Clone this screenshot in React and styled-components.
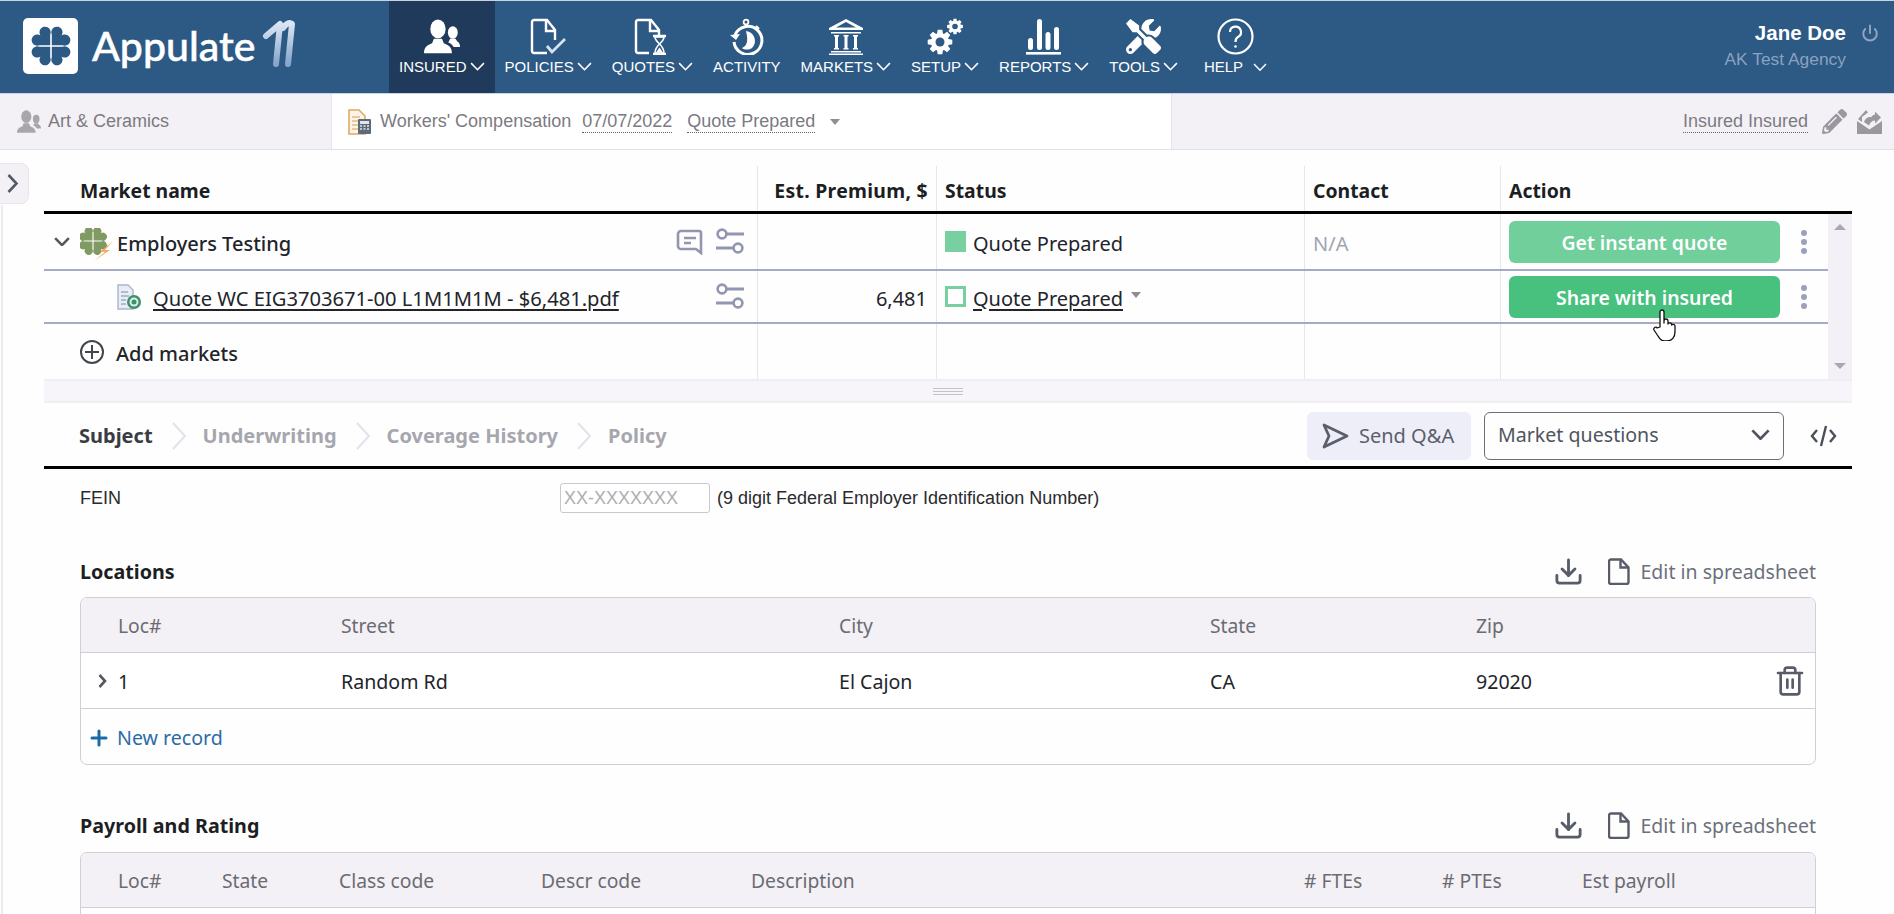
import React from "react";
import styled, { createGlobalStyle } from "styled-components";
import { FaTools, FaPencilAlt } from "react-icons/fa";
import { Power, Download, Trash2, Plus } from "lucide-react";

const GlobalStyle = createGlobalStyle`
    html, body {
        margin: 0;
        height: 100%;
        overflow: hidden;
        background: #fefefe;
        font-family: "Noto Sans", "Liberation Sans", sans-serif;
        color: #22242a;
    }
    * { box-sizing: border-box; }
`;

const Page = styled.div`
    width: 1894px;
    height: 914px;
    overflow: hidden;
`;

/* top bar */
const TopBar = styled.header`
    height: 94px;
    display: flex;
    background: #2d5985;
    border-top: 1px solid #c9d4e3;
    border-bottom: 1px solid #cdd3e6;
    color: #fff;
    font-family: "Liberation Sans", Arial, sans-serif;
`;

const LogoArea = styled.div`
    width: 389px;
    padding: 17px 0 0 23px;
    display: flex;
    align-items: flex-start;
`;

const LogoBox = styled.div`
    width: 55px;
    height: 56px;
    background: #fff;
    border-radius: 5px;
    display: flex;
    align-items: center;
    justify-content: center;
`;

const LogoName = styled.span`
    margin: 4px 0 0 14px;
    font-family: Lato, sans-serif;
    font-size: 41px;
    line-height: 48px;
    font-weight: 500;
    -webkit-text-stroke: 0.5px #fff;
`;

const NavItem = styled.div`
    padding: 17px 10px 0;
    display: flex;
    flex-direction: column;
    align-items: center;
    background: ${(p) => (p.$active ? "#1f3a5a" : "transparent")};
`;

const HelpItem = styled(NavItem)`
    margin-left: 6px;
`;

const NavIcon = styled.div`
    height: 37px;
    display: flex;
    align-items: center;
    justify-content: center;
`;

const NavLabel = styled.div`
    margin-top: 3px;
    display: flex;
    align-items: center;
    gap: ${(p) => p.$gap || 3}px;
    font-size: 15px;
    line-height: 18px;
    white-space: nowrap;
`;

const UserArea = styled.div`
    margin-left: auto;
    padding: 20px 15px 0 0;
    display: flex;
    gap: 15px;
    align-items: flex-start;
`;

const UserText = styled.div`
    text-align: right;
`;

const UserName = styled.div`
    font-size: 20.5px;
    line-height: 24px;
    font-weight: 700;
`;

const UserAgency = styled.div`
    margin-top: 2px;
    font-size: 17.4px;
    line-height: 24px;
    color: #8aa3bf;
`;

/* bar under the top bar */
const SubBar = styled.div`
    height: 56px;
    display: flex;
    font-family: "Liberation Sans", Arial, sans-serif;
    font-size: 18px;
    color: #7c7a82;
    border-bottom: 1px solid #e2e0e6;
`;

const SubSection = styled.div`
    width: ${(p) => p.$width};
    flex: ${(p) => (p.$width ? "none" : 1)};
    background: ${(p) => (p.$white ? "#fff" : "#f3f1f5")};
    border-left: ${(p) => (p.$white ? "1px solid #e4e4ee" : "none")};
    border-right: ${(p) => (p.$white ? "1px solid #e4e4ee" : "none")};
    padding: ${(p) => p.$padding};
    display: flex;
    align-items: center;
    justify-content: ${(p) => (p.$end ? "flex-end" : "flex-start")};
    gap: ${(p) => p.$gap ?? 8}px;
`;

const Dotted = styled.span`
    border-bottom: 1px dotted #666;
    line-height: 21px;
    margin-top: 1px;
    margin-left: ${(p) => p.$left || 0}px;
`;

const SubLabel = styled.span`
    margin-left: 8px;
`;

const Caret = styled.span`
    width: 0;
    height: 0;
    border-left: 5.5px solid transparent;
    border-right: 5.5px solid transparent;
    border-top: 6px solid ${(p) => p.$color || "#8e8c94"};
    margin-left: ${(p) => p.$left || 0}px;
    margin-bottom: ${(p) => p.$raise || 0}px;
`;

/* main */
const Main = styled.main`
    position: relative;
    padding: 16px 42px 0 44px;
`;

const SideEdge = styled.div`
    position: absolute;
    left: 1px;
    top: 55px;
    bottom: 0;
    width: 2px;
    background: #eaeaf0;
`;

const SideToggle = styled.div`
    position: absolute;
    left: 0;
    top: 13px;
    width: 29px;
    height: 41px;
    background: #f3f1f5;
    border: 1px solid #e8e6ec;
    border-left: none;
    border-radius: 0 8px 8px 0;
    display: flex;
    align-items: center;
    padding-left: 7px;
    color: #555a66;
`;

const MarketHead = styled.div`
    display: grid;
    grid-template-columns: 713px 179px 368px 196px 1fr;
    height: 48px;
    border-bottom: 3px solid #000;
`;

const HeadCell = styled.div`
    display: flex;
    align-items: center;
    justify-content: ${(p) => (p.$right ? "flex-end" : "flex-start")};
    padding: ${(p) => (p.$right ? "4px 8px 0 0" : p.$first ? "4px 0 0 36px" : "4px 0 0 8px")};
    border-left: ${(p) => (p.$first ? "none" : "1px solid #e6e6f0")};
    font-size: 19.4px;
    font-weight: 700;
    letter-spacing: ${(p) => (p.$right ? "0.3px" : "0")};
    color: #1c1e24;
    white-space: nowrap;
`;

const MarketBody = styled.div`
    display: flex;
`;

const MarketRows = styled.div`
    flex: 1;
`;

const MarketRow = styled.div`
    display: grid;
    grid-template-columns: 713px 179px 368px 196px 1fr;
    height: ${(p) => p.$height}px;
    border-bottom: ${(p) => (p.$last ? "none" : "2px solid #a6aac6")};
`;

const Cell = styled.div`
    display: flex;
    align-items: center;
    justify-content: ${(p) => (p.$right ? "flex-end" : "flex-start")};
    gap: ${(p) => p.$gap || 0}px;
    padding: ${(p) => p.$padding || "0 0 0 8px"};
    border-left: ${(p) => (p.$first ? "none" : "1px solid #e6e6f0")};
    font-size: 20px;
    white-space: nowrap;
`;

const RowText = styled.span`
    padding-top: 3px;
    font-weight: ${(p) => p.$weight || 400};
    color: ${(p) => p.$color || "inherit"};
`;

const RowTools = styled.div`
    margin-left: auto;
    display: flex;
    align-items: center;
    gap: 13px;
    color: #9296b0;
`;

const Link = styled(RowText)`
    font-size: ${(p) => p.$size || 20}px;
    text-decoration: underline;
    text-underline-offset: 3px;
    text-decoration-thickness: 2px;
`;

const Swatch = styled.span`
    width: 21px;
    height: 21px;
    border: 3px solid #78d0a0;
    background: ${(p) => (p.$filled ? "#78d0a0" : "#fff")};
    margin-right: 7px;
    flex: none;
`;

const IconSlot = styled.span`
    display: flex;
    margin: 5px 3px 0 10px;
`;

const ActionButton = styled.div`
    width: 271px;
    height: 42px;
    padding-top: 2px;
    border-radius: 6px;
    background: ${(p) => p.$color};
    color: #fff;
    font-size: 19.4px;
    font-weight: 600;
    display: flex;
    align-items: center;
    justify-content: center;
`;

const MoreDots = styled.div`
    margin-left: 21px;
    display: flex;
    flex-direction: column;
    gap: 3px;
    & > i {
        width: 6px;
        height: 6px;
        border-radius: 50%;
        background: #9ca0bb;
    }
`;

const ScrollTrack = styled.div`
    width: 24px;
    background: #f3f1f5;
    display: flex;
    flex-direction: column;
    justify-content: space-between;
    align-items: center;
    padding: 10px 0;
`;

const ScrollArrow = styled.span`
    width: 0;
    height: 0;
    border-left: 6px solid transparent;
    border-right: 6px solid transparent;
    border-bottom: ${(p) => (p.$up ? "6px solid #a8a8b0" : "none")};
    border-top: ${(p) => (p.$up ? "none" : "6px solid #a8a8b0")};
`;

const Cursor = styled.svg`
    position: absolute;
    left: 1652px;
    top: 159px;
`;

const Splitter = styled.div`
    height: 24px;
    background: #f7f5f9;
    border-top: 2px solid #f0eef3;
    border-bottom: 2px solid #f0eef3;
    display: flex;
    flex-direction: column;
    align-items: center;
    justify-content: center;
    gap: 2px;
    & > i {
        width: 30px;
        height: 1px;
        background: #c2c2ca;
    }
`;

const StepBar = styled.div`
    height: 66px;
    display: flex;
    align-items: center;
    padding: 2px 15px 0 35px;
    border-bottom: 3px solid #000;
`;

const Step = styled.span`
    font-size: 20px;
    font-weight: 700;
    color: ${(p) => (p.$active ? "#3a3c44" : "#a6a7ae")};
`;

const StepSep = styled.svg`
    margin: 0 16px 0 19px;
    flex: none;
`;

const SendButton = styled.div`
    margin-left: auto;
    width: 164px;
    height: 48px;
    border-radius: 6px;
    background: #eeeef8;
    color: #5b5f6c;
    display: flex;
    align-items: center;
    padding-left: 15px;
    gap: 10px;
    font-size: 20px;
`;

const QuestionSelect = styled.div`
    margin-left: 13px;
    width: 300px;
    height: 48px;
    border: 1px solid #6a7078;
    border-radius: 6px;
    display: flex;
    align-items: center;
    justify-content: space-between;
    padding: 0 13px 2px;
    font-size: 19.6px;
    color: #50545e;
`;

const CodeButton = styled.div`
    margin-left: 26px;
    display: flex;
    color: #4b4f5a;
`;

const Form = styled.div`
    padding: 0 36px 0 36px;
`;

const FeinRow = styled.div`
    display: grid;
    grid-template-columns: 480px 150px 1fr;
    align-items: center;
    margin-top: 14px;
    height: 30px;
    font-family: "Liberation Sans", Arial, sans-serif;
    font-size: 18px;
    color: #2a2a2e;
`;

const FeinInput = styled.input`
    width: 150px;
    height: 30px;
    padding: 0 3px;
    border: 1px solid #c8c8ce;
    border-radius: 3px;
    font: inherit;
    &::placeholder {
        color: #aeaeb2;
        opacity: 1;
    }
`;

const FeinHint = styled.span`
    margin-left: 7px;
    white-space: nowrap;
`;

const SectionHead = styled.div`
    display: flex;
    align-items: center;
    height: 38px;
    margin-top: ${(p) => p.$top}px;
    margin-bottom: ${(p) => p.$bottom}px;
`;

const SectionTitle = styled.h3`
    margin: 0;
    font-size: 19.7px;
    font-weight: 700;
    color: #1c1e24;
`;

const SectionTools = styled.div`
    margin-left: auto;
    display: flex;
    align-items: center;
    color: #585c68;
    font-size: 19.5px;
    & > span {
        color: #6c707c;
        margin-left: 11px;
    }
    & > svg + svg {
        margin-left: 24px;
    }
`;

const DataTable = styled.div`
    border: 1px solid #cfcfd6;
    border-radius: 7px;
    overflow: hidden;
`;

const DataRow = styled.div`
    display: grid;
    grid-template-columns: ${(p) => p.$columns};
    height: ${(p) => p.$height || 55}px;
    padding-top: 1px;
    align-items: center;
    font-size: ${(p) => (p.$head ? 19.3 : 19.6)}px;
    background: ${(p) => (p.$head ? "#f3f1f5" : "#fff")};
    color: ${(p) => (p.$head ? "#6b6b74" : "#22242a")};
    border-bottom: ${(p) => (p.$last ? "none" : "1px solid #cfcfd6")};
`;

const DataCell = styled.span`
    display: flex;
    align-items: center;
    justify-content: ${(p) => (p.$center ? "center" : "flex-start")};
    padding-left: ${(p) => p.$left || 0}px;
    color: ${(p) => p.$color || "inherit"};
`;

const NewRecord = styled.div`
    display: flex;
    align-items: center;
    gap: 6px;
    padding: 2px 0 0 6px;
    color: #2b6ca6;
    height: 55px;
    font-size: 19.6px;
`;

const Chevron = ({ size = 14, width = 1.6, color = "currentColor" }) => (
    <svg width={size} height={size * 0.62} viewBox="0 0 14 8.7" fill="none" stroke={color} strokeWidth={width}>
        <path d="M1 1l6 6.2L13 1" />
    </svg>
);

const Lobes = ({ fill }) => (
    <g fill={fill}>
        {[0, 90, 180, 270].map((r) => (
            <path key={r} transform={`rotate(${r})`} d="M.8-.8V-11.5A5.6 5.6 0 1 1 9.2-9.2 5.6 5.6 0 1 1 11.5-.8Z" />
        ))}
    </g>
);

const CloverLogo = () => (
    <svg width="40" height="40" viewBox="-20 -20 40 40">
        <Lobes fill="#2d5985" />
    </svg>
);

const ElevenMark = () => (
    <svg width="36" height="50" viewBox="0 0 36 50" style={{ margin: "3px 0 0 8px", overflow: "visible" }}>
        <defs>
            <linearGradient id="eleven" x1="0" y1="0" x2="0" y2="1">
                <stop offset="0" stopColor="#dbe6f4" />
                <stop offset="1" stopColor="#86a5c9" />
            </linearGradient>
        </defs>
        <path d="M3 15L17 3 13 43" fill="none" stroke="url(#eleven)" strokeWidth="6" strokeLinecap="round" strokeLinejoin="round" />
        <path d="M20 7Q25 0 29 3L25 43" fill="none" stroke="url(#eleven)" strokeWidth="6" strokeLinecap="round" strokeLinejoin="round" />
    </svg>
);

const People = ({ size = 36, color = "#fff" }) => (
    <svg width={size} height={size} viewBox="0 0 40 40" fill={color}>
        <ellipse cx="15.5" cy="11" rx="8.5" ry="10.5" />
        <path d="M0 38c0-7 4-9 9-11l2-5h9l2 5c5 2 9 4 9 11z" />
        <ellipse cx="32" cy="15" rx="5.5" ry="7" />
        <path d="M27 26l2-4h6l2 3c2 1 3 3 3 6h-7c-1-2-3-4-6-5z" />
    </svg>
);

const PolicyIcon = () => (
    <svg width="38" height="37" viewBox="0 0 38 37" fill="none" stroke="#fff" strokeWidth="2.4">
        <path d="M18 35H5a2 2 0 0 1-2-2V4a2 2 0 0 1 2-2h13l8 10v10" />
        <path d="M17 2v11h9" />
        <path d="M18 28l5 6 13-13" strokeWidth="2.8" stroke="#d5e3ef" />
    </svg>
);

const QuoteIcon = () => (
    <svg width="38" height="37" viewBox="0 0 38 37" fill="none" stroke="#fff" strokeWidth="2.4">
        <path d="M16 35H5a2 2 0 0 1-2-2V4a2 2 0 0 1 2-2h13l8 10v5" />
        <path d="M17 2v11h9" />
        <path d="M20 18h13M20 36h13" />
        <path d="M22 19c0 6 9 7 9 16H22c0-9 9-10 9-16z" strokeWidth="1.6" />
        <path d="M23 34.5l3.5-5 3.5 5z" fill="#fff" stroke="none" />
    </svg>
);

const ActivityIcon = () => (
    <svg width="36" height="37" viewBox="0 0 36 37" fill="none" stroke="#fff" strokeWidth="3">
        <circle cx="17" cy="4" r="2.4" strokeWidth="1.8" />
        <path d="M17 7v3M27 8l3 3" strokeWidth="2.2" />
        <path d="M6 17a14 14 0 1 1-1 7" />
        <path d="M1 17l6 5 4-6z" fill="#fff" stroke="none" />
        <path d="M17 13a10 10 0 0 1 6 17c-3 2-8 2-10 0 4-2 7-5 4-17z" fill="#fff" stroke="none" />
    </svg>
);

const BankIcon = () => (
    <svg width="36" height="37" viewBox="0 0 36 37" fill="#fff" stroke="none">
        <path d="M18 1L1 10v2h34v-2zM18 4l10 5.5H8z" fillRule="evenodd" />
        <path d="M3 14h30v1.5H3zM6 17h5v1.5h-1V30h1v1.5H6V30h1V18.5H6zM15.5 17h5v1.5h-1V30h1v1.5h-5V30h1V18.5h-1zM25 17h5v1.5h-1V30h1v1.5h-5V30h1V18.5h-1zM3 33h30v1.5H3zM1 35.5h34V37H1z" />
    </svg>
);

const gearPath = (cx, cy, outer, inner, teeth) => {
    const pts = [];
    const step = (Math.PI * 2) / teeth;
    for (let i = 0; i < teeth; i++) {
        const a = i * step;
        [[-0.3, inner], [-0.17, outer], [0.17, outer], [0.3, inner]].forEach(([o, r]) => {
            pts.push(`${(cx + Math.cos(a + o * step * 1.4) * r).toFixed(2)} ${(cy + Math.sin(a + o * step * 1.4) * r).toFixed(2)}`);
        });
    }
    return `M${pts.join("L")}Z`;
};

const GearIcon = () => (
    <svg width="36" height="37" viewBox="0 0 36 37" fill="#fff">
        <path d={gearPath(13, 24, 12.5, 9, 8)} />
        <circle cx="13" cy="24" r="4.5" fill="#2d5985" />
        <path d={gearPath(28, 8.5, 8, 5.8, 8)} />
        <circle cx="28" cy="8.5" r="2.8" fill="#2d5985" />
    </svg>
);

const BarsIcon = () => (
    <svg width="36" height="37" viewBox="0 0 36 37" fill="#fff">
        <rect x="2" y="20" width="5" height="12" rx="2.5" />
        <rect x="11" y="1" width="5" height="31" rx="2.5" />
        <rect x="19.5" y="14" width="5" height="18" rx="2.5" />
        <rect x="28" y="9" width="5" height="23" rx="2.5" />
        <rect x="0" y="34" width="35" height="2.6" />
    </svg>
);

const HelpIcon = () => (
    <svg width="37" height="37" viewBox="0 0 37 37" fill="none" stroke="#fff" strokeWidth="2.2">
        <circle cx="18.5" cy="18.5" r="17" />
        <path d="M13 14a5.5 5.5 0 1 1 8 5c-2 1-2.5 2-2.5 5" />
        <circle cx="18.5" cy="28.5" r="1.3" fill="#fff" stroke="none" />
    </svg>
);

const navItems = [
    { label: "INSURED", icon: <People />, active: true, arrow: true },
    { label: "POLICIES", icon: <PolicyIcon />, arrow: true },
    { label: "QUOTES", icon: <QuoteIcon />, arrow: true },
    { label: "ACTIVITY", icon: <ActivityIcon /> },
    { label: "MARKETS", icon: <BankIcon />, arrow: true },
    { label: "SETUP", icon: <GearIcon />, arrow: true },
    { label: "REPORTS", icon: <BarsIcon />, arrow: true },
    { label: "TOOLS", icon: <FaTools size={35} />, arrow: true },
];

const EnvelopeIcon = () => (
    <svg width="25" height="25" viewBox="0 0 25 25" fill="#9a989f" style={{ marginLeft: -4 }}>
        <path d="M0 12v13h25V12l-12.500 8.500z" />
        <path d="M1 10l4 3V8l6-4.500L9 1zM14 8c-4 0-6 2-7 5l5 3.500c1-3 3-5 6-5v3l6-6-6-6v3c-1 0-3 1-4 3z" />
    </svg>
);

const WorkerDocIcon = () => (
    <svg width="24" height="26" viewBox="0 0 24 26">
        <path d="M1 1h10l6 6v18H1z" fill="#fdf4e6" stroke="#e0a868" strokeWidth="1.6" />
        <path d="M4 8h8M4 12h6M4 16h6M4 20h6" stroke="#e0b98a" strokeWidth="1.4" />
        <rect x="10" y="10" width="13" height="15" rx="1" fill="#5d6a78" />
        <rect x="12" y="12" width="9" height="3" fill="#dfe6ec" />
        <path d="M12 17h2M15.500 17h2M19 17h2M12 20h2M15.500 20h2M19 20h2" stroke="#dfe6ec" strokeWidth="1.6" />
    </svg>
);

const SlidersIcon = () => (
    <svg width="28" height="27" viewBox="0 0 28 27" fill="none" stroke="#9296b0" strokeWidth="2.6">
        <circle cx="6" cy="6" r="4.400" />
        <path d="M11 6h17M0 20h17" strokeWidth="3" />
        <circle cx="22" cy="20" r="4.400" />
    </svg>
);

const CommentIcon = () => (
    <svg width="27" height="26" viewBox="0 0 27 26" fill="none" stroke="#9296b0" strokeWidth="2.6">
        <path d="M5 2h18a2 2 0 0 1 2 2v20l-5-4H5a3 3 0 0 1-3-3V5a3 3 0 0 1 3-3z" />
        <path d="M8 9h12M8 14h7" />
    </svg>
);

const MarketIcon = () => (
    <svg width="34" height="33" viewBox="-13 -13 34 33">
        <g transform="scale(.72)">
            <Lobes fill="#7f9a62" />
        </g>
        <path d="M20 0L7 11h5L1 20 17 9h-5z" fill="#f5a868" />
    </svg>
);

const QuoteDocIcon = () => (
    <svg width="24" height="26" viewBox="0 0 24 26">
        <path d="M1 1h10l5 5v19H1z" fill="#e7eef8" stroke="#aab6cc" strokeWidth="1.4" />
        <path d="M4 8h7M4 12h8M4 16h5M4 20h5" stroke="#9fadc4" strokeWidth="1.3" />
        <circle cx="17" cy="18" r="7" fill="#3f8f6a" />
        <circle cx="17" cy="18" r="4.500" fill="#d9efe6" />
        <circle cx="17" cy="18" r="2.500" fill="#3f8f6a" />
    </svg>
);

const AddIcon = () => (
    <svg width="24" height="24" viewBox="0 0 24 24" fill="none" stroke="#44464e" strokeWidth="2">
        <circle cx="12" cy="12" r="11" />
        <path d="M12 5v14M5 12h14" />
    </svg>
);

const SepIcon = () => (
    <StepSep width="15" height="28" viewBox="0 0 15 28" fill="none" stroke="#e2e2ec" strokeWidth="2">
        <path d="M1 1l12 13L1 27" />
    </StepSep>
);

const SendIcon = () => (
    <svg width="27" height="26" viewBox="0 0 27 26" fill="none" stroke="#5b5f6c" strokeWidth="2.8" strokeLinejoin="round">
        <path d="M2 2l23 11L2 24l5-11z" />
    </svg>
);

const CodeIcon = () => (
    <svg width="27" height="22" viewBox="0 0 27 22" fill="none" stroke="currentColor" strokeWidth="2.4">
        <path d="M7 5l-5 6 5 6M20 5l5 6-5 6M16 1l-5 20" />
    </svg>
);

const SheetIcon = () => (
    <svg width="22" height="27" viewBox="0 0 22 27" fill="none" stroke="currentColor" strokeWidth="2.4">
        <path d="M3 1.500h10l7.500 8V24a2 2 0 0 1-2 2H3a2 2 0 0 1-2-2V3.500a2 2 0 0 1 2-2z" />
        <path d="M12.500 2v7.500h7.500" />
    </svg>
);

const Hand = () => (
    <Cursor width="25" height="32" viewBox="0 0 25 32" fill="#fff" stroke="#111" strokeWidth="1.300" strokeLinejoin="round">
        <path d="M8 18V3a2 2 0 0 1 4 0v11l0-2a2 2 0 0 1 4 0v3a2 2 0 0 1 3.600 0v1a2 2 0 0 1 3.400 1v6c0 5-3 9-8 9h-2c-4 0-5-2-7-5l-4-6c-1-2 2-4 3-2z" />
    </Cursor>
);

const SheetTools = () => (
    <SectionTools>
        <Download size={31} strokeWidth={2.2} />
        <SheetIcon />
        <span>Edit in spreadsheet</span>
    </SectionTools>
);

const Dots = () => (
    <MoreDots>
        <i />
        <i />
        <i />
    </MoreDots>
);

const locationColumns = "37px 223px 498px 371px 266px 1fr 41px";
const payrollColumns = "37px 104px 117px 202px 210px 553px 138px 140px 1fr";

const App = () => {
    return (
        <Page>
            <GlobalStyle />
            <TopBar>
                <LogoArea>
                    <LogoBox>
                        <CloverLogo />
                    </LogoBox>
                    <LogoName>Appulate</LogoName>
                    <ElevenMark />
                </LogoArea>
                {navItems.map((item) => (
                    <NavItem key={item.label} $active={item.active}>
                        <NavIcon>{item.icon}</NavIcon>
                        <NavLabel>
                            {item.label}
                            {item.arrow && <Chevron size={15} width={1.5} />}
                        </NavLabel>
                    </NavItem>
                ))}
                <HelpItem>
                    <NavIcon>
                        <HelpIcon />
                    </NavIcon>
                    <NavLabel $gap={10}>
                        HELP
                        <Chevron size={14} width={1.5} />
                    </NavLabel>
                </HelpItem>
                <UserArea>
                    <UserText>
                        <UserName>Jane Doe</UserName>
                        <UserAgency>AK Test Agency</UserAgency>
                    </UserText>
                    <Power size={18} color="#8fa6c0" strokeWidth={2.6} style={{ marginTop: 3 }} />
                </UserArea>
            </TopBar>

            <SubBar>
                <SubSection $width="331px" $padding="0 0 0 17px" $gap={7}>
                    <People size={24} color="#a8a6ac" />
                    Art &amp; Ceramics
                </SubSection>
                <SubSection $white $width="841px" $padding="0 0 0 16px" $gap={0}>
                    <WorkerDocIcon />
                    <SubLabel>Workers' Compensation</SubLabel>
                    <Dotted $left={11}>07/07/2022</Dotted>
                    <Dotted $left={15}>Quote Prepared</Dotted>
                    <Caret $left={15} />
                </SubSection>
                <SubSection $end $padding="0 12px 0 0" $gap={14}>
                    <Dotted>Insured Insured</Dotted>
                    <FaPencilAlt size={25} color="#9a989f" />
                    <EnvelopeIcon />
                </SubSection>
            </SubBar>

            <Main>
                <SideEdge />
                <SideToggle>
                    <svg width="12" height="19" viewBox="0 0 12 19" fill="none" stroke="currentColor" strokeWidth="2.600">
                        <path d="M1.500 1l8 8.500-8 8.500" />
                    </svg>
                </SideToggle>

                <MarketHead>
                    <HeadCell $first>Market name</HeadCell>
                    <HeadCell $right>Est. Premium, $</HeadCell>
                    <HeadCell>Status</HeadCell>
                    <HeadCell>Contact</HeadCell>
                    <HeadCell>Action</HeadCell>
                </MarketHead>

                <MarketBody>
                    <MarketRows>
                        <MarketRow $height={57}>
                            <Cell $first $padding="0 13px 0 10px">
                                <Chevron size={16} width={2.2} color="#55585f" />
                                <IconSlot>
                                    <MarketIcon />
                                </IconSlot>
                                <RowText $weight={500}>Employers Testing</RowText>
                                <RowTools>
                                    <CommentIcon />
                                    <SlidersIcon />
                                </RowTools>
                            </Cell>
                            <Cell />
                            <Cell>
                                <Swatch $filled />
                                <RowText>Quote Prepared</RowText>
                            </Cell>
                            <Cell>
                                <RowText $color="#a2a4b4">N/A</RowText>
                            </Cell>
                            <Cell>
                                <ActionButton $color="#70cf9b">Get instant quote</ActionButton>
                                <Dots />
                            </Cell>
                        </MarketRow>
                        <MarketRow $height={53}>
                            <Cell $first $padding="0 13px 0 73px" $gap={12}>
                                <QuoteDocIcon />
                                <Link $size={20.15}>Quote WC EIG3703671-00 L1M1M1M - $6,481.pdf</Link>
                                <RowTools>
                                    <SlidersIcon />
                                </RowTools>
                            </Cell>
                            <Cell $right $padding="0 9px 0 0">
                                <RowText>6,481</RowText>
                            </Cell>
                            <Cell>
                                <Swatch />
                                <Link>Quote Prepared</Link>
                                <Caret $left={8} $raise={3} />
                            </Cell>
                            <Cell />
                            <Cell>
                                <ActionButton $color="#48c07e">Share with insured</ActionButton>
                                <Dots />
                            </Cell>
                        </MarketRow>
                        <MarketRow $height={55} $last>
                            <Cell $first $padding="0 0 0 36px" $gap={12}>
                                <AddIcon />
                                <RowText $weight={500}>Add markets</RowText>
                            </Cell>
                            <Cell />
                            <Cell />
                            <Cell />
                            <Cell />
                        </MarketRow>
                    </MarketRows>
                    <ScrollTrack>
                        <ScrollArrow $up />
                        <ScrollArrow />
                    </ScrollTrack>
                </MarketBody>
                <Hand />

                <Splitter>
                    <i />
                    <i />
                    <i />
                </Splitter>

                <StepBar>
                    <Step $active>Subject</Step>
                    <SepIcon />
                    <Step>Underwriting</Step>
                    <SepIcon />
                    <Step>Coverage History</Step>
                    <SepIcon />
                    <Step>Policy</Step>
                    <SendButton>
                        <SendIcon />
                        Send Q&amp;A
                    </SendButton>
                    <QuestionSelect>
                        Market questions
                        <Chevron size={19} width={2} />
                    </QuestionSelect>
                    <CodeButton>
                        <CodeIcon />
                    </CodeButton>
                </StepBar>

                <Form>
                    <FeinRow>
                        <span>FEIN</span>
                        <FeinInput placeholder="XX-XXXXXXX" />
                        <FeinHint>(9 digit Federal Employer Identification Number)</FeinHint>
                    </FeinRow>

                    <SectionHead $top={39} $bottom={7}>
                        <SectionTitle>Locations</SectionTitle>
                        <SheetTools />
                    </SectionHead>
                    <DataTable>
                        <DataRow $head $columns={locationColumns}>
                            <span />
                            <DataCell>Loc#</DataCell>
                            <DataCell>Street</DataCell>
                            <DataCell>City</DataCell>
                            <DataCell>State</DataCell>
                            <DataCell>Zip</DataCell>
                        </DataRow>
                        <DataRow $columns={locationColumns} $height={56}>
                            <DataCell $center $left={5} $color="#55585f">
                                <svg width="9" height="14" viewBox="0 0 9 14" fill="none" stroke="currentColor" strokeWidth="2.600">
                                    <path d="M1.500 1l5.500 6-5.500 6" />
                                </svg>
                            </DataCell>
                            <DataCell>1</DataCell>
                            <DataCell>Random Rd</DataCell>
                            <DataCell>El Cajon</DataCell>
                            <DataCell>CA</DataCell>
                            <DataCell>92020</DataCell>
                            <DataCell $color="#585c68">
                                <Trash2 size={32} strokeWidth={2} />
                            </DataCell>
                        </DataRow>
                        <NewRecord>
                            <Plus size={24} strokeWidth={3} color="#1a6aa8" />
                            New record
                        </NewRecord>
                    </DataTable>

                    <SectionHead $top={41} $bottom={8}>
                        <SectionTitle>Payroll and Rating</SectionTitle>
                        <SheetTools />
                    </SectionHead>
                    <DataTable>
                        <DataRow $head $columns={payrollColumns}>
                            <span />
                            <DataCell>Loc#</DataCell>
                            <DataCell>State</DataCell>
                            <DataCell>Class code</DataCell>
                            <DataCell>Descr code</DataCell>
                            <DataCell>Description</DataCell>
                            <DataCell># FTEs</DataCell>
                            <DataCell># PTEs</DataCell>
                            <DataCell>Est payroll</DataCell>
                        </DataRow>
                        <DataRow $columns={payrollColumns} $last />
                    </DataTable>
                </Form>
            </Main>
        </Page>
    );
};

export default App;
